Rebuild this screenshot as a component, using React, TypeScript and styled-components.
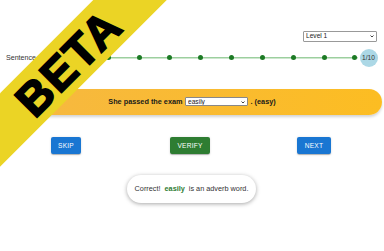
import React from "react";
import styled, { createGlobalStyle } from "styled-components";

const GlobalStyle = createGlobalStyle`
  html, body {
    margin: 0;
    padding: 0;
    background: #fff;
  }
  body {
    font-family: "Liberation Sans", Arial, sans-serif;
    color: #222;
    overflow: hidden;
  }
`;

const TOTAL_DOTS = 11;

function Chevron() {
  return (
    <ChevronIcon viewBox="0 0 8 5" aria-hidden="true">
      <path d="M1 1l3 3 3-3" fill="none" stroke="#111" strokeWidth="1.6" />
    </ChevronIcon>
  );
}

export default function App() {
  return (
    <Page>
      <GlobalStyle />
      <TopBar>
        <SelectBox>
          <LevelSelect defaultValue="1">
            <option value="1">Level 1</option>
            <option value="2">Level 2</option>
            <option value="3">Level 3</option>
          </LevelSelect>
          <Chevron />
        </SelectBox>
      </TopBar>

      <ProgressRow>
        <ProgressLabel>Sentence</ProgressLabel>
        <Track>
          {Array.from({ length: TOTAL_DOTS }).map((_, i) => (
            <Dot key={i} />
          ))}
        </Track>
        <Counter>1/10</Counter>
      </ProgressRow>

      <SentenceBar>
        She passed the exam
        <SelectBox $inline>
          <WordSelect defaultValue="easily">
            <option value="easily">easily</option>
            <option value="easy">easy</option>
          </WordSelect>
          <Chevron />
        </SelectBox>
        . (easy)
      </SentenceBar>

      <Actions>
        <ActionButton $tone="blue">Skip</ActionButton>
        <ActionButton $tone="green">Verify</ActionButton>
        <ActionButton $tone="blue">Next</ActionButton>
      </Actions>

      <FeedbackWrap>
        <Feedback>
          Correct!<Answer>easily</Answer>is an adverb word.
        </Feedback>
      </FeedbackWrap>

      <Ribbon>BETA</Ribbon>
    </Page>
  );
}

const Page = styled.div`
  position: relative;
  width: 384px;
  height: 251px;
  overflow: hidden;
  padding-top: 31px;
  box-sizing: border-box;
`;

const TopBar = styled.div`
  display: flex;
  justify-content: flex-end;
  padding-right: 7px;
`;

const SelectBox = styled.span<{ $inline?: boolean }>`
  position: relative;
  display: inline-flex;
  margin: ${({ $inline }) => ($inline ? "0 2.5px" : "0")};
`;

const ChevronIcon = styled.svg`
  position: absolute;
  right: 3px;
  top: 50%;
  width: 4px;
  height: 2.5px;
  margin-top: -1px;
  pointer-events: none;
`;

const LevelSelect = styled.select`
  appearance: none;
  width: 74px;
  height: 10.5px;
  padding: 0 0 0 2px;
  font-family: "Liberation Sans", Arial, sans-serif;
  font-size: 6.6px;
  line-height: 8px;
  color: #222;
  border: 1px solid #999;
  border-radius: 1px;
  background: #fff;
`;

const ProgressRow = styled.div`
  display: flex;
  align-items: center;
  height: 18px;
  margin-top: 7px;
  padding: 0 6.5px 0 6px;
`;

const ProgressLabel = styled.span`
  font-size: 7.1px;
  color: #333;
`;

const Track = styled.div`
  flex: 1;
  display: flex;
  justify-content: space-between;
  align-items: center;
  margin: 0 2px 0 8px;
  height: 6px;
  background: linear-gradient(#9ccf9e, #9ccf9e) center / 100% 1.5px no-repeat;
`;

const Dot = styled.span`
  width: 5px;
  height: 5px;
  border-radius: 50%;
  background: #1c7a24;
`;

const Counter = styled.div`
  width: 18px;
  height: 18px;
  border-radius: 50%;
  background: #acd8e6;
  color: #333;
  font-size: 6.6px;
  display: flex;
  align-items: center;
  justify-content: center;
`;

const SentenceBar = styled.div`
  display: flex;
  align-items: center;
  justify-content: center;
  height: 26px;
  margin: 22px 2px 0;
  border-radius: 13px;
  background: linear-gradient(90deg, #f6b843, #fcbd22);
  box-shadow: 0 2px 3px rgba(0, 0, 0, 0.18);
  font-size: 7.3px;
  font-weight: bold;
  color: #1a1a1a;
`;

const WordSelect = styled.select`
  appearance: none;
  width: 63px;
  height: 9.5px;
  padding: 0 0 0 2px;
  font-family: "Liberation Sans", Arial, sans-serif;
  font-size: 6.6px;
  line-height: 7px;
  font-weight: normal;
  color: #222;
  border: 1px solid #888;
  border-radius: 1px;
  background: #fff;
`;

const Actions = styled.div`
  display: grid;
  grid-template-columns: repeat(3, 1fr);
  justify-items: center;
  margin-top: 22px;
  padding: 0 8px 0 4px;
`;

const ActionButton = styled.button<{ $tone: "blue" | "green" }>`
  min-width: 30px;
  height: 17px;
  padding: 0 7.5px;
  border: none;
  border-radius: 2px;
  background: ${({ $tone }) => ($tone === "green" ? "#2e7d32" : "#1976d2")};
  color: #fff;
  font-family: "Liberation Sans", Arial, sans-serif;
  font-size: 6.6px;
  letter-spacing: 0.2px;
  text-transform: uppercase;
  box-shadow: 0 1.5px 0.5px -1px rgba(0, 0, 0, 0.2),
    0 1px 1px rgba(0, 0, 0, 0.14), 0 0.5px 2.5px rgba(0, 0, 0, 0.12);
`;

const FeedbackWrap = styled.div`
  display: flex;
  justify-content: center;
  margin-top: 21px;
  padding-right: 1px;
`;

const Feedback = styled.div`
  display: flex;
  align-items: center;
  height: 28px;
  padding: 0 8px;
  box-sizing: border-box;
  border-radius: 14px;
  background: #fff;
  box-shadow: 0 1px 4px rgba(0, 0, 0, 0.35);
  font-size: 7.3px;
  color: #333;
`;

const Answer = styled.b`
  margin: 0 4px;
  color: #2e7d32;
`;

const Ribbon = styled.div`
  position: absolute;
  left: -95px;
  top: 39px;
  width: 320px;
  height: 52px;
  box-sizing: border-box;
  padding-left: 8px;
  transform: rotate(-45deg);
  background: #ebd425;
  color: #000;
  font-size: 46px;
  font-weight: bold;
  line-height: 54px;
  text-align: center;
  -webkit-text-stroke: 1.8px #000;
  letter-spacing: 1.5px;
`;
